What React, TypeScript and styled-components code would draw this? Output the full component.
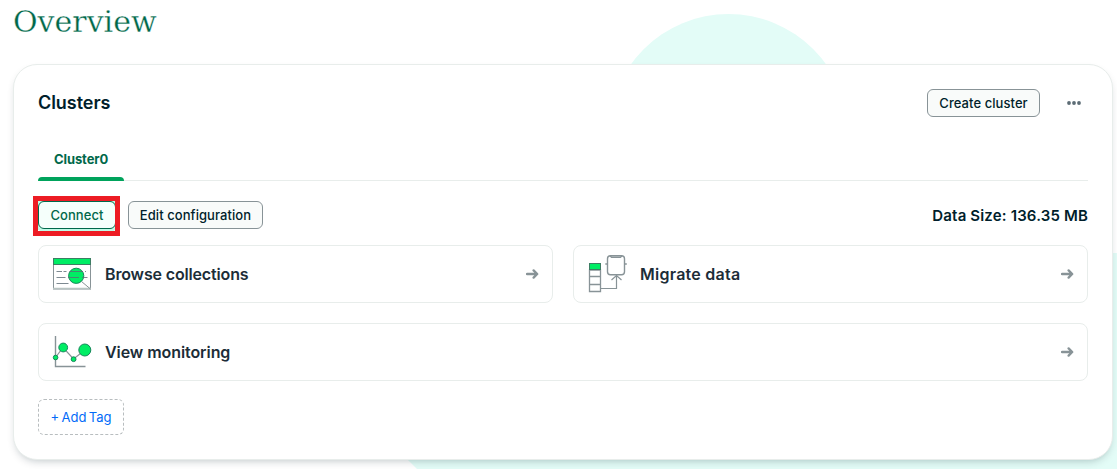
import type { ReactNode } from "react"
import styled, { createGlobalStyle } from "styled-components"

const GlobalStyle = createGlobalStyle`
  *,
  *::after {
    box-sizing: border-box;
  }

  body {
    margin: 0;
    background: #ffffff;
    color: #001e2b;
    font-family: Inter, "Liberation Sans", sans-serif;
    overflow: hidden;
  }
`

const Page = styled.main`
  position: relative;
  width: 1117px;
  height: 469px;
  padding: 0 4px 0 13px;
  overflow: hidden;
`

/* Decorative shapes behind the card */
const Backdrop = styled.svg`
  position: absolute;
  inset: 0;
  z-index: -1;
`

const PageTitle = styled.h1`
  margin: 0;
  height: 64px;
  padding-top: 2px;
  color: #00684a;
  font-family: "DejaVu Serif", serif;
  font-size: 30px;
  font-weight: 400;
  line-height: 40px;
  -webkit-text-stroke: 0.3px #ffffff; /* thins the strokes */
`

const Card = styled.section`
  width: 1100px;
  height: 396px;
  padding: 24px;
  border: 1px solid #e8edeb;
  border-radius: 24px;
  background: #ffffff;
  box-shadow: 0 4px 10px -4px rgba(0, 30, 43, 0.3);
`

const CardHeader = styled.header`
  display: flex;
  align-items: center;
  height: 28px;
`

const CardTitle = styled.h2`
  margin: 0 auto 0 0;
  font-size: 18px;
  font-weight: 600;
  line-height: 24px;
  letter-spacing: -0.05px;
`

const Button = styled.button<{ $width: number; $active?: boolean }>`
  width: ${({ $width }) => $width}px;
  height: 28px;
  padding: 0;
  border: 1px solid ${({ $active }) => ($active ? "#00684a" : "#889397")};
  border-radius: 6px;
  background: ${({ $active }) => ($active ? "#f5fffb" : "#f9fbfa")};
  box-shadow: ${({ $active }) => ($active ? "0 0 0 3px #c0fae6" : "none")};
  color: ${({ $active }) => ($active ? "#00684a" : "#001e2b")};
  font-family: inherit;
  font-size: 13px;
  font-weight: 450;
  line-height: 20px;
  letter-spacing: 0.07px;
  white-space: nowrap;
`

const MoreButton = styled.button`
  display: flex;
  align-items: center;
  justify-content: center;
  width: 28px;
  height: 28px;
  margin-left: 20px;
  padding: 0;
  border: 0;
  background: none;
`

const Tabs = styled.nav`
  display: flex;
  height: 64px;
  padding-top: 22px;
  box-shadow: inset 0 -1px #e8edeb;
`

const Tab = styled.div`
  width: 86px;
  height: 42px;
  padding: 10px 0 0 16px;
  color: #00684a;
  font-size: 13px;
  font-weight: 700;
  line-height: 20px;
  letter-spacing: -0.1px;

  &::after {
    content: "";
    display: block;
    width: 86px;
    height: 4px;
    margin: 8px 0 0 -16px;
    border-radius: 4px 4px 0 0;
    background: #00a35c;
  }
`

const Actions = styled.div`
  display: flex;
  align-items: center;
  gap: 12px;
  height: 28px;
  margin: 20px 0 16px;
`

const Highlight = styled.div`
  position: relative;
  height: 28px;

  &::after {
    content: "";
    position: absolute;
    top: -5px;
    left: -5px;
    width: 87px;
    height: 40px;
    border: 5px solid #ed1c24;
  }
`

const DataSize = styled.strong`
  margin-left: auto;
  padding-top: 1px;
  font-size: 15px;
  font-weight: 600;
  line-height: 24px;
  letter-spacing: 0.16px;
`

const Links = styled.div`
  display: grid;
  grid-template-columns: 1fr 1fr;
  gap: 20px;
`

const LinkCard = styled.a<{ $wide?: boolean }>`
  display: flex;
  align-items: center;
  grid-column: ${({ $wide }) => ($wide ? "1 / -1" : "auto")};
  height: 58px;
  padding: 0 12px;
  border: 1px solid #e8edeb;
  border-radius: 8px;
  color: #1c2d38;
`

const LinkLabel = styled.span<{ $spacing: number }>`
  margin: 0 auto 0 12px;
  font-size: 16px;
  font-weight: 600;
  line-height: 24px;
  letter-spacing: ${({ $spacing }) => $spacing}px;
`

const AddTag = styled.button`
  display: block;
  width: 86px;
  height: 36px;
  margin-top: 18px;
  padding: 0;
  border: 1px dashed #b8bdbf;
  border-radius: 6px;
  background: none;
  color: #016bf8;
  font-family: inherit;
  font-size: 13px;
  line-height: 20px;
  word-spacing: -1.3px;
`

function ArrowIcon() {
  return (
    <svg width="14" height="14" viewBox="0 0 14 14" fill="none" stroke="#889397" strokeWidth="2.3">
      <path d="M1 7H11M7.6 3.4L11.2 7L7.6 10.6" strokeLinecap="round" strokeLinejoin="round" />
    </svg>
  )
}

function BrowseIcon() {
  return (
    <svg width="42" height="42" viewBox="0 0 42 42" fill="none">
      <rect x="2.5" y="5.5" width="37" height="30.5" stroke="#889397" />
      <path d="M2 35.5H40" stroke="#b8c4c2" strokeWidth="1.5" />
      <rect x="2.5" y="5.5" width="37" height="6" fill="#00ed64" stroke="#3d7d63" />
      <circle cx="25.2" cy="22.8" r="7.6" fill="#00ed64" stroke="#16885b" />
      <path d="M5.5 18.5H11M12.5 18.5H15.5M18.5 18.5H32M34 18.5H35M5.5 24.5H14.5M17 24.5H28M31 24.5H36.5M5.5 30.5H17.5" stroke="#5c6c75" strokeOpacity=".8" />
      <path d="M30.5 28.5L39.5 36" stroke="#889397" />
    </svg>
  )
}

function MigrateIcon() {
  return (
    <svg width="42" height="42" viewBox="0 0 42 42" fill="none" stroke="#889397">
      <path d="M3.5 17H14.5V38.5H3.5ZM3.5 23.5H14.5M3.5 31.5H14.5" strokeWidth="1.3" />
      <rect x="3.5" y="10.5" width="11" height="6" fill="#00ed64" stroke="#3d7d63" />
      <rect x="21.5" y="2.8" width="17" height="19" rx="3" strokeWidth="1.4" />
      <path d="M24 2.8L25.5 4.2H34.5L36 2.8M19.3 11H21.5M38.5 11H40.8" strokeWidth="1.4" />
      <path d="M14.5 35.5H30.5V22.5M25.5 27L30.5 22.5L35.5 27" strokeWidth="1.2" />
    </svg>
  )
}

function MonitoringIcon() {
  return (
    <svg width="42" height="42" viewBox="0 0 42 42" fill="none">
      <path d="M4.5 5V35.5H34.5" stroke="#889397" strokeWidth="1.4" />
      <path d="M4.5 26.5L12 16.5L22.5 28L34 19" stroke="#889397" strokeWidth="1.2" />
      <g fill="#00ed64" stroke="#16885b">
        <circle cx="4.6" cy="26.5" r="2.3" />
        <circle cx="12.2" cy="16.5" r="4.4" />
        <circle cx="22.6" cy="28.2" r="2.4" />
        <circle cx="33.8" cy="19" r="6" />
      </g>
    </svg>
  )
}

type ClusterLinkProps = {
  icon: ReactNode
  label: string
  spacing?: number
  wide?: boolean
}

function ClusterLink({ icon, label, spacing = 0, wide }: ClusterLinkProps) {
  return (
    <LinkCard $wide={wide}>
      {icon}
      <LinkLabel $spacing={spacing}>{label}</LinkLabel>
      <ArrowIcon />
    </LinkCard>
  )
}

export default function App() {
  return (
    <>
      <GlobalStyle />
      <Page>
        <Backdrop width="1117" height="469" fill="#e3fcf7">
          <circle cx="728.5" cy="134" r="120" />
          <path d="M200 253H1117V469H417Z" />
        </Backdrop>
        <PageTitle>Overview</PageTitle>
        <Card>
          <CardHeader>
            <CardTitle>Clusters</CardTitle>
            <Button $width={113}>Create cluster</Button>
            <MoreButton aria-label="More options">
              <svg width="14" height="4" viewBox="0 0 14 4" fill="#5c6c75">
                <circle cx="2" cy="2" r="1.9" />
                <circle cx="7" cy="2" r="1.9" />
                <circle cx="12" cy="2" r="1.9" />
              </svg>
            </MoreButton>
          </CardHeader>

          <Tabs>
            <Tab>Cluster0</Tab>
          </Tabs>

          <Actions>
            <Highlight>
              <Button $width={78} $active>Connect</Button>
            </Highlight>
            <Button $width={135}>Edit configuration</Button>
            <DataSize>Data Size: 136.35 MB</DataSize>
          </Actions>

          <Links>
            <ClusterLink icon={<BrowseIcon />} label="Browse collections" spacing={-0.15} />
            <ClusterLink icon={<MigrateIcon />} label="Migrate data" spacing={0.25} />
            <ClusterLink icon={<MonitoringIcon />} label="View monitoring" spacing={-0.07} wide />
          </Links>

          <AddTag>+ Add Tag</AddTag>
        </Card>
      </Page>
    </>
  )
}
